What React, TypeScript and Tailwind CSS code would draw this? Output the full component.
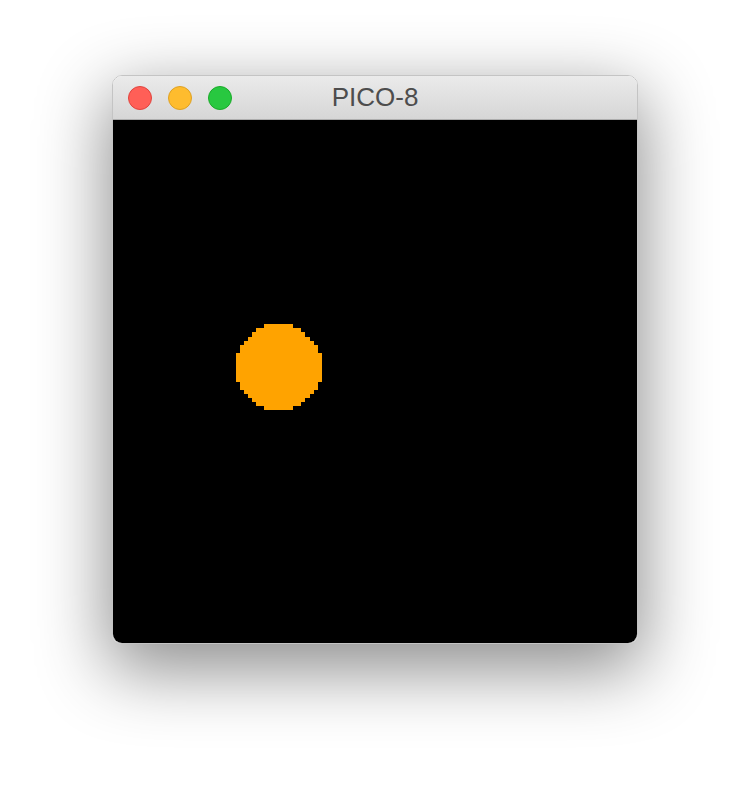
import React from 'react';

// pico-8 style filled circle, one rect per scanline
const CX = 40;
const CY = 60;
const R = 10;

const rows = Array.from({ length: R * 2 + 1 }, (_, i) => {
  const dy = i - R;
  let w = 0;
  while ((w + 1) * (w + 1) + dy * dy <= (R + 0.5) * (R + 0.5)) w++;
  return { y: CY + dy, x: CX - w, len: w * 2 + 1 };
});

function Light({ color, ring }: { color: string; ring: string }) {
  return <div className={`w-6 h-6 rounded-full border ${color} ${ring}`} />;
}

export default function App() {
  return (
    <div className="w-[750px] h-[792px] bg-white pt-[75px] pl-[112px]" style={{ fontFamily: '"Liberation Sans", Arial, sans-serif' }}>
      <div className="w-[526px] rounded-[10px] overflow-hidden border border-[#c4c4c4] shadow-[0_22px_70px_4px_rgba(0,0,0,0.45)]">
        <div className="relative h-[44px] flex items-center gap-4 px-[15px] bg-gradient-to-b from-[#ebebeb] to-[#d6d6d6] border-b border-[#adadad]">
          <Light color="bg-[#ff5f57]" ring="border-[#e0443e]" />
          <Light color="bg-[#febc2e]" ring="border-[#dea123]" />
          <Light color="bg-[#28c840]" ring="border-[#1aab29]" />
          <div className="absolute inset-0 flex items-center justify-center text-[26px] text-[#4d4d4d] pointer-events-none">
            PICO-8
          </div>
        </div>
        <div className="bg-black h-[523px]">
          <svg width="524" height="523" viewBox="0 0 128 128" preserveAspectRatio="none" shapeRendering="crispEdges" className="block">
            {rows.map((r) => (
              <rect key={r.y} x={r.x} y={r.y} width={r.len} height={1} fill="#ffa300" />
            ))}
          </svg>
        </div>
      </div>
    </div>
  );
}
